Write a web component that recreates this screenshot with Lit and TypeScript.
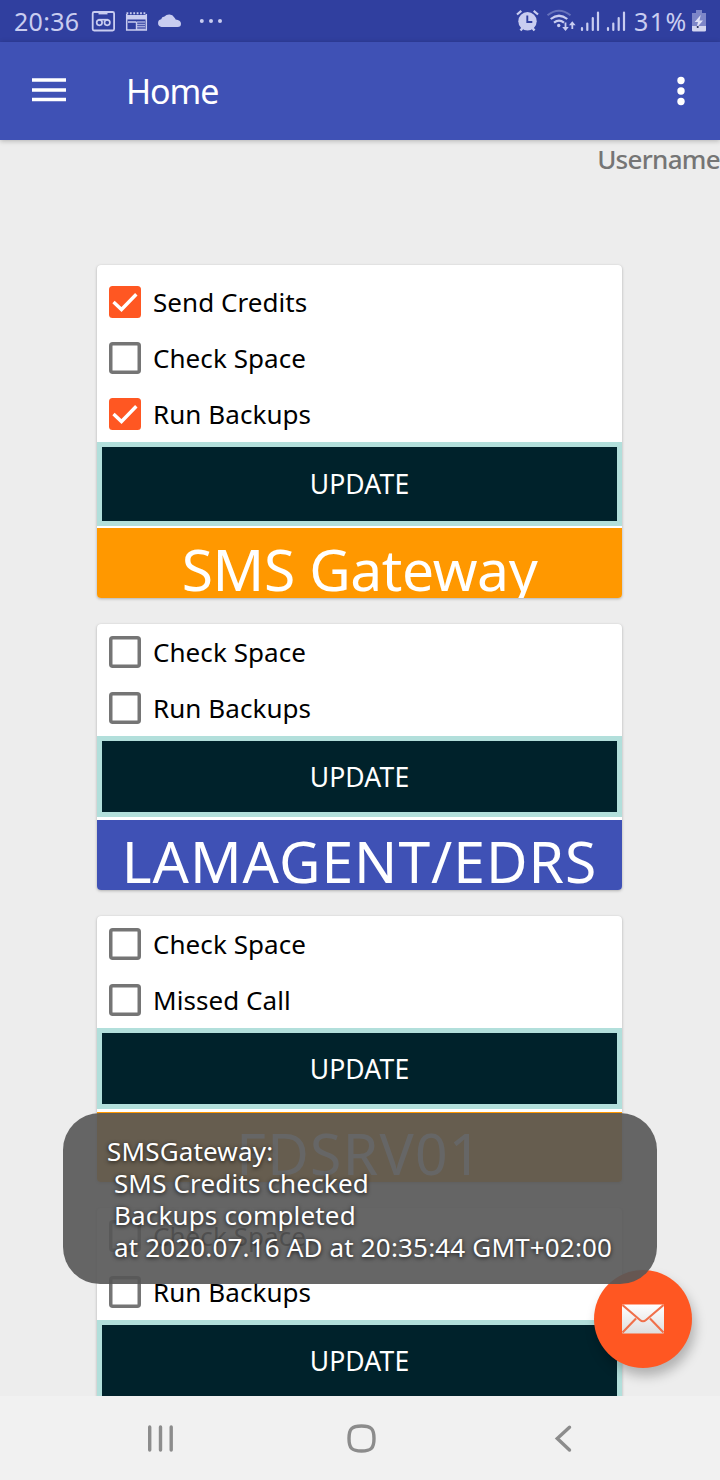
import { LitElement, html, css, svg } from "lit";
import { customElement, property } from "lit/decorators.js";
import { classMap } from "lit/directives/class-map.js";

interface Task {
  label: string;
  checked?: boolean;
}

interface Server {
  name: string;
  kind: string;
  tasks: Task[];
}

const SERVERS: Server[] = [
  {
    name: "SMS Gateway",
    kind: "sms",
    tasks: [
      { label: "Send Credits", checked: true },
      { label: "Check Space" },
      { label: "Run Backups", checked: true },
    ],
  },
  { name: "LAMAGENT/EDRS", kind: "edrs", tasks: [{ label: "Check Space" }, { label: "Run Backups" }] },
  { name: "FDSRV01", kind: "fds", tasks: [{ label: "Check Space" }, { label: "Missed Call" }] },
  { name: "", kind: "last", tasks: [{ label: "Check Space" }, { label: "Run Backups" }] },
];

@customElement("status-bar")
class StatusBar extends LitElement {
  static styles = css`
    :host {
      display: flex;
      height: 42px;
      background: #303f9f;
      color: #c9cdf0;
      font-size: 25px;
      line-height: 42px;
    }
    svg {
      display: block;
      flex: none;
    }
    .clock {
      width: 91px;
      padding-left: 14px;
      box-sizing: border-box;
      letter-spacing: 0.3px;
    }
    .gap {
      flex: 1;
    }
    .pct {
      width: 58px;
      letter-spacing: 1.4px;
      white-space: nowrap;
    }
  `;
  render() {
    return html`
      <div class="clock">20:36</div>
      <svg width="140" height="42" viewBox="91 0 140 42" fill="none" stroke="#c9cdf0">
        <rect x="92.7" y="12" width="21.400" height="18.500" rx="1.500" stroke-width="1.800" />
        <path d="M98.500 12.300h9v2.100h-9z" fill="#c9cdf0" stroke="none" />
        <g stroke-width="1.700">
          <circle cx="99.400" cy="22.600" r="2.700" />
          <circle cx="107.200" cy="22.600" r="2.700" />
          <path d="M98.500 19.700h9.500" />
        </g>
        <path d="M126.700 14v16h19.600V14" stroke-width="1.500" />
        <path d="M126 15h21v4.500h-21z" fill="#c9cdf0" stroke="none" />
        <path d="M126.500 13.300h20" stroke-width="2" stroke-dasharray="1.800 1.600" />
        <path d="M128 22h8.500M136.500 22v8" stroke-width="1.400" />
        <path d="M137 22h8M137 24.400h8M137 26.800h8M137 29.200h8" stroke-width="1.500" stroke-opacity=".75" />
        <path
          d="M161.500 27a3.900 3.900 0 0 1-.3-7.700q.5-2.600 3.300-2.700a6 6 0 0 1 9.800.8q1 .8 1.300 2.100c3.200.2 5.400 1.700 5.400 4.300q0 3.200-3.400 3.200z"
          fill="#c9cdf0"
          stroke="none"
        />
        <g fill="#c9cdf0" stroke="none">
          <circle cx="201.800" cy="21" r="2" />
          <circle cx="211" cy="21" r="2" />
          <circle cx="220" cy="21" r="2" />
        </g>
      </svg>
      <div class="gap"></div>
      <svg width="120" height="42" viewBox="514 0 120 42" fill="none" stroke="#c9cdf0">
        <circle cx="527.500" cy="21.200" r="9.200" fill="#c9cdf0" stroke="none" />
        <path d="M517 14.500l4.300-3.700M538 14.500l-4.300-3.700" stroke-width="2.200" />
        <path d="M520.500 30.500l2.500-3M534.500 30.500l-2.500-3" stroke-width="2.400" />
        <path d="M527.300 15.500v6.500h5" stroke="#303f9f" stroke-width="1.900" />
        <path d="M547.500 15.300q11.500-9 23 0" stroke-width="2" stroke-opacity=".35" />
        <path d="M550.700 19q8.300-6.500 16.600 0" stroke-width="2.200" />
        <path d="M554 22.600q5-3.800 10 0" stroke-width="2.200" />
        <circle cx="558.700" cy="25.500" r="1.700" fill="#c9cdf0" stroke="none" />
        <path d="M565.500 22.500v6M572.300 29v-6" stroke-width="1.800" />
        <path d="M562.200 27h6.600l-3.300 4zM569 25.300h6.600l-3.300-4z" fill="#c9cdf0" stroke="none" />
        <g stroke-width="2.200" stroke-linecap="round">
          <path d="M582 28v2M587.300 23.500v6.500M592.800 18v12M598 12.500v17.500" />
          <path d="M608 28v2M613.300 23.500v6.500M618.700 18v12M624 12.500v17.500" />
        </g>
      </svg>
      <div class="pct">31%</div>
      <svg width="28" height="42" viewBox="692 0 28 42">
        <path d="M696 10h6v3h4v18h-14v-18h4z" fill="#7d86c8" />
        <path d="M692 26h14v4q0 1.500-1.500 1.500h-11q-1.500 0-1.500-1.500z" fill="#d3d6f0" />
        <path d="M700.700 15l-6 7h3.300l-1.500 6 6.500-7.500h-3.500z" fill="#dfe1f6" />
        <circle cx="697.700" cy="27" r="1.100" fill="#222b55" />
      </svg>
    `;
  }
}

@customElement("task-row")
class TaskRow extends LitElement {
  @property() label = "";
  @property({ type: Boolean }) checked = false;
  static styles = css`
    :host {
      display: flex;
      align-items: center;
      height: 56px;
      padding-left: 12px;
      color: #000;
      font-size: 26px;
    }
    svg {
      display: block;
      flex: none;
      margin-right: 12px;
    }
    .label {
      white-space: nowrap;
      letter-spacing: 0.06px;
      line-height: 32px;
    }
  `;
  render() {
    return html`
      <svg width="32" height="32" viewBox="0 0 32 32">
        ${this.checked
          ? svg`<rect width="32" height="32" rx="3.500" fill="#ff5722" />
              <path d="M4.500 16l8 7.500L27.300 8.300" fill="none" stroke="#fff" stroke-width="3.400" />`
          : svg`<rect x="1.750" y="1.750" width="28.500" height="28.500" rx="2" fill="none" stroke="#757575" stroke-width="3.500" />`}
      </svg>
      <span class="label">${this.label}</span>
    `;
  }
}

@customElement("server-card")
class ServerCard extends LitElement {
  @property({ attribute: false }) server!: Server;
  static styles = css`
    :host {
      display: block;
      flex: none;
      width: 525px;
      border-radius: 4px;
      background: #fff;
      box-shadow: 0 1px 3px rgba(0, 0, 0, 0.25), 0 0 1px rgba(0, 0, 0, 0.1);
      overflow: hidden;
    }
    .sms-tasks {
      padding-top: 9px;
    }
    .update {
      display: flex;
      width: 100%;
      height: 81px;
      box-sizing: border-box;
      align-items: center;
      justify-content: center;
      margin: 0 0 3px;
      padding: 0;
      border: 5px solid #b2dfdb;
      border-radius: 0;
      background: #00222b;
      color: #fff;
      font: inherit;
      font-size: 26.5px;
      letter-spacing: 0.15px;
    }
    .sms-update {
      height: 84px;
      margin-bottom: 2px;
    }
    .name {
      height: 70px;
      overflow: hidden;
      background: #ff9800;
      color: #fff;
      font-size: 57px;
      line-height: 82px;
      text-align: center;
      white-space: nowrap;
    }
    .sms {
      letter-spacing: -0.4px;
    }
    .edrs {
      background: #3f51b5;
      letter-spacing: 1px;
    }
    .fds {
      letter-spacing: 1.3px;
    }
  `;
  render() {
    const { name, kind, tasks } = this.server;
    const sms = kind === "sms";
    return html`
      <div class=${classMap({ "sms-tasks": sms })}>
        ${tasks.map((t) => html`<task-row .label=${t.label} .checked=${!!t.checked}></task-row>`)}
      </div>
      <button class=${classMap({ update: true, "sms-update": sms })}>UPDATE</button>
      <div class="name ${kind}">${name}</div>
    `;
  }
}

@customElement("app-root")
class AppRoot extends LitElement {
  static styles = css`
    :host {
      display: flex;
      flex-direction: column;
      position: relative;
      width: 720px;
      height: 1480px;
      overflow: hidden;
      background: #ededed;
      font-family: "Noto Sans", sans-serif;
    }
    svg {
      display: block;
      flex: none;
    }
    .bar {
      display: flex;
      align-items: center;
      flex: none;
      height: 98px;
      box-sizing: border-box;
      padding: 0 32px;
      background: #3f51b5;
      color: #fff;
      box-shadow: 0 1px 5px rgba(0, 0, 0, 0.25);
      z-index: 1;
    }
    .title {
      flex: 1;
      padding: 0 0 0 58px;
      font-size: 34px;
      letter-spacing: -1.1px;
    }
    .content {
      flex: 1;
      min-height: 0;
      overflow: hidden;
      display: flex;
      flex-direction: column;
      align-items: center;
      gap: 26px;
    }
    .user {
      align-self: stretch;
      flex: none;
      height: 99px;
      line-height: 38px;
      text-align: right;
      color: #757575;
      font-size: 26px;
      font-weight: 500;
      letter-spacing: -0.7px;
    }
    .content server-card {
      margin-right: 1px;
    }
    .nav {
      display: flex;
      align-items: center;
      flex: none;
      height: 84px;
      background: #f1f1f1;
    }
    .fab {
      position: absolute;
      left: 594px;
      top: 1270px;
      width: 98px;
      height: 98px;
      border-radius: 50%;
      background: #ff5722;
      box-shadow: 3px 8px 12px rgba(0, 0, 0, 0.25);
      display: flex;
      align-items: center;
      justify-content: center;
    }
    .toast {
      position: absolute;
      left: 63px;
      top: 1113px;
      width: 594px;
      height: 171px;
      box-sizing: border-box;
      padding: 22px 0 0 44px;
      border-radius: 37px;
      background: rgba(87, 87, 87, 0.91);
      color: #fff;
      font-size: 26px;
      line-height: 32px;
      letter-spacing: 0.17px;
      white-space: pre;
      text-shadow: 0 1px 4px rgba(0, 0, 0, 0.8);
    }
  `;
  render() {
    return html`
      <status-bar></status-bar>
      <header class="bar">
        <svg width="36" height="28" viewBox="0 0 36 28">
          <path d="M0 2h34M0 12h34M0 21.500h34" transform="translate(0 1)" stroke="#fff" stroke-width="3.600" />
        </svg>
        <span class="title">Home</span>
        <svg width="14" height="30" viewBox="0 0 14 30" fill="#fff">
          <circle cx="7" cy="4.500" r="3.700" />
          <circle cx="7" cy="15" r="3.700" />
          <circle cx="7" cy="25.500" r="3.700" />
        </svg>
      </header>
      <main class="content">
        <div class="user">Username</div>
        ${SERVERS.map((s) => html`<server-card .server=${s}></server-card>`)}
      </main>
      <nav class="nav">
        <svg width="720" height="84" viewBox="0 1396 720 84" fill="none" stroke="#8c8c8c" stroke-width="3.400" stroke-linecap="round">
          <path d="M149.700 1427v23M160.500 1427v23M171.200 1427v23" />
          <path d="M361.500 1426c9.700 0 12.500 2.800 12.500 12.500s-2.800 12.500-12.500 12.500-12.500-2.800-12.500-12.500 2.800-12.500 12.500-12.500z" />
          <path d="M569.500 1427.200l-12.200 11.300 12.200 11.500" />
        </svg>
      </nav>
      <div class="fab">
        <svg width="42" height="30" viewBox="0 0 42 30">
          <defs>
            <linearGradient id="paper" x1="0" y1="0" x2="0" y2="1">
              <stop offset="0" stop-color="#fff" />
              <stop offset="1" stop-color="#dedede" />
            </linearGradient>
          </defs>
          <rect y=".500" width="42" height="29" rx="1" fill="url(#paper)" />
          <path d="M.500 1l17.500 15q3 2.500 6 0L41.500 1M.500 28.500L14 14.500M41.500 28.500L28 14.500" fill="none" stroke="#f0704a" stroke-width="2.100" />
        </svg>
      </div>
      <div class="toast">SMSGateway:
 SMS Credits checked
 Backups completed
 at 2020.07.16 AD at 20:35:44 GMT+02:00</div>
    `;
  }
}
